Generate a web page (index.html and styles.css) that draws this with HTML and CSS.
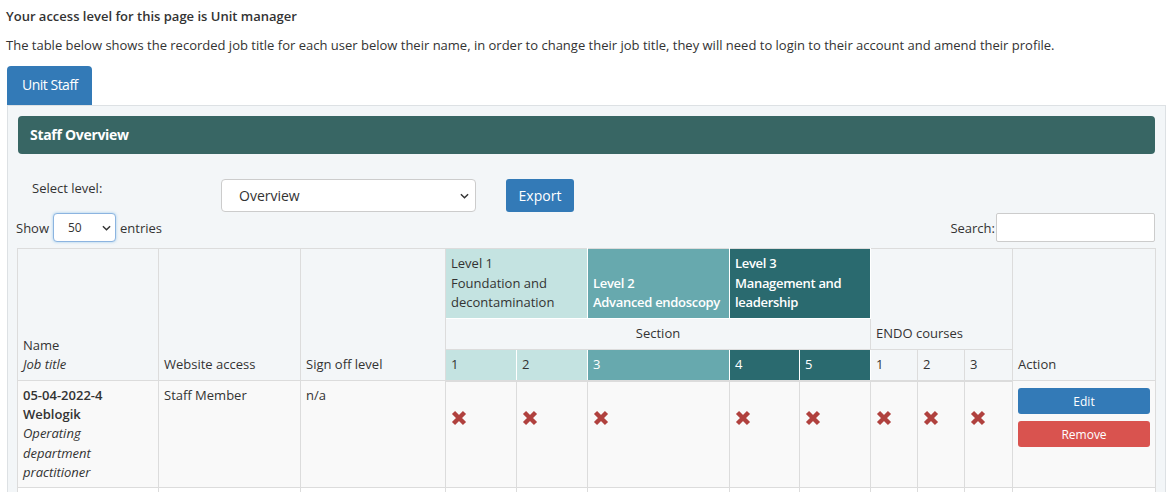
FILE: index.html
```html
<!DOCTYPE html>
<html>
<head>
<meta charset="utf-8">
<link rel="stylesheet" href="styles.css">
</head>
<body>
<div class="page">
  <p class="access">Your access level for this page is Unit manager</p>
  <p class="intro">The table below shows the recorded job title for each user below their name, in order to change their job title, they will need to login to their account and amend their profile.</p>
  <div class="tabs"><span class="tab">Unit Staff</span></div>
  <div class="panel">
    <div class="panel-head">Staff Overview</div>
    <div class="level-row">
      <label class="level-label">Select level:</label>
      <div class="select big"><span>Overview</span><svg class="chev" viewBox="0 0 10 6"><path d="M1 1l4 4 4-4" fill="none" stroke="#333" stroke-width="1.6"/></svg></div>
      <button class="btn btn-blue export">Export</button>
    </div>
    <div class="dt-row">
      <div class="show">Show <div class="select small"><span>50</span><svg class="chev" viewBox="0 0 10 6"><path d="M1 1l4 4 4-4" fill="none" stroke="#333" stroke-width="1.6"/></svg></div> entries</div>
      <div class="search">Search:<div class="search-input"></div></div>
    </div>
    <table class="grid">
      <colgroup>
        <col style="width:141px"><col style="width:142px"><col style="width:145px">
        <col style="width:71px"><col style="width:71px"><col style="width:142px">
        <col style="width:70px"><col style="width:71px">
        <col style="width:47px"><col style="width:47px"><col style="width:48px">
        <col style="width:143px">
      </colgroup>
      <thead>
        <tr class="r1">
          <th rowspan="3">Name<br><i>Job title</i></th>
          <th rowspan="3">Website access</th>
          <th rowspan="3">Sign off level</th>
          <th colspan="2" class="l1">Level 1<br>Foundation and decontamination</th>
          <th class="l2 strong">Level 2<br>Advanced endoscopy</th>
          <th colspan="2" class="l3 strong">Level 3<br>Management and leadership</th>
          <th colspan="3" rowspan="2">ENDO courses</th>
          <th rowspan="3">Action</th>
        </tr>
        <tr class="r2">
          <th colspan="5" class="center">Section</th>
        </tr>
        <tr class="r3">
          <th class="l1">1</th><th class="l1">2</th><th class="l2">3</th><th class="l3">4</th><th class="l3">5</th>
          <th>1</th><th>2</th><th>3</th>
        </tr>
      </thead>
      <tbody>
        <tr>
          <td class="name"><b>05-04-2022-4<br>Weblogik</b><br><i>Operating department practitioner</i></td>
          <td>Staff Member</td>
          <td>n/a</td>
          <td><svg class="x" viewBox="0 0 18 18"><path d="M3.5 3.5l11 11M14.5 3.5l-11 11"/></svg></td>
          <td><svg class="x" viewBox="0 0 18 18"><path d="M3.5 3.5l11 11M14.5 3.5l-11 11"/></svg></td>
          <td><svg class="x" viewBox="0 0 18 18"><path d="M3.5 3.5l11 11M14.5 3.5l-11 11"/></svg></td>
          <td><svg class="x" viewBox="0 0 18 18"><path d="M3.5 3.5l11 11M14.5 3.5l-11 11"/></svg></td>
          <td><svg class="x" viewBox="0 0 18 18"><path d="M3.5 3.5l11 11M14.5 3.5l-11 11"/></svg></td>
          <td><svg class="x" viewBox="0 0 18 18"><path d="M3.5 3.5l11 11M14.5 3.5l-11 11"/></svg></td>
          <td><svg class="x" viewBox="0 0 18 18"><path d="M3.5 3.5l11 11M14.5 3.5l-11 11"/></svg></td>
          <td><svg class="x" viewBox="0 0 18 18"><path d="M3.5 3.5l11 11M14.5 3.5l-11 11"/></svg></td>
          <td class="actions"><button class="btn btn-blue act">Edit</button><button class="btn btn-red act">Remove</button></td>
        </tr>
        <tr class="next"><td></td><td></td><td></td><td></td><td></td><td></td><td></td><td></td><td></td><td></td><td></td><td></td></tr>
      </tbody>
    </table>
  </div>
</div>
</body>
</html>
```
FILE: styles.css
```css
html, body {
  margin: 0;
  padding: 0;
  background: #fff;
  overflow: hidden;
}
body {
  font-family: "Open Sans", "Noto Sans", sans-serif;
  font-size: 13px;
  color: #333;
  line-height: 20px;
}
.page {
  padding: 6px 7px 0 6px;
}
.access {
  margin: 0;
  font-weight: 600;
}
.intro {
  margin: 9px 0 0 0;
}
.tabs {
  margin-top: 11px;
  padding-left: 1px;
  display: flex;
}
.tab {
  display: block;
  background: #337ab7;
  color: #fff;
  font-size: 14px;
  padding: 9px 14px 10px 15px;
  border-radius: 4px 4px 0 0;
  white-space: nowrap;
  letter-spacing: -0.5px;
}
.panel {
  margin-left: 1px;
  background: #f3f6f8;
  border: 1px solid #dde1e4;
  border-bottom: none;
  padding: 10px 10px 0 10px;
  height: 400px;
}
.panel-head {
  background: #386664;
  color: #fff;
  font-weight: 700;
  font-size: 14px;
  height: 38px;
  line-height: 38px;
  padding-left: 12px;
  border-radius: 4px;
  letter-spacing: -0.3px;
}
.level-row {
  display: flex;
  align-items: flex-start;
  margin-top: 25px;
  height: 34px;
}
.level-label {
  width: 189px;
  padding-left: 14px;
  line-height: 16px;
  padding-top: 1px;
}
.select {
  background: #fff;
  border: 1px solid #ccc;
  border-radius: 4px;
  display: flex;
  align-items: center;
  justify-content: space-between;
  box-sizing: border-box;
}
.select.big {
  width: 255px;
  height: 33px;
  padding: 0 6px 0 17px;
  font-size: 14px;
}
.select.small {
  width: 63px;
  height: 29px;
  padding: 0 4px 0 14px;
  font-size: 12px;
  margin: 0 4px 0 4px;
  border-color: #8cb4e0;
  box-shadow: 0 0 3px rgba(102, 175, 233, 0.6);
}
.chev {
  width: 9px;
  height: 6px;
}
.btn {
  border: none;
  color: #fff;
  font-family: inherit;
  border-radius: 3px;
  display: block;
  cursor: pointer;
}
.btn-blue { background: #337ab7; }
.btn-red { background: #d9534f; }
.export {
  margin-left: 30px;
  width: 68px;
  height: 33px;
  font-size: 14px;
  padding: 0;
}
.dt-row {
  display: flex;
  justify-content: space-between;
  align-items: center;
  margin-left: -2px;
  height: 29px;
}
.show {
  display: flex;
  align-items: center;
}
.search {
  display: flex;
  align-items: center;
}
.search-input {
  width: 157px;
  height: 27px;
  background: #fff;
  border: 1px solid #ccc;
  border-radius: 2px;
  margin-left: 1px;
}
.grid {
  margin-top: 6px;
  margin-left: -1px;
  border-collapse: collapse;
  table-layout: fixed;
  width: 1138px;
}
.grid th, .grid td {
  border: 1px solid #dcdcdc;
  padding: 5px;
  text-align: left;
  vertical-align: bottom;
  font-weight: 400;
  line-height: 19.7px;
}
.grid thead th {
  background: #f3f6f8;
}
.grid thead tr.r3 th {
  border-bottom: 2px solid #dcdcdc;
}
.grid th.center { text-align: center; }
.grid th.l1 { background: #c4e3e1; border-color: #fff; border-top-color: #dcdcdc; }
.grid th.l2 { background: #67a9ae; color: #fff; border-color: #fff; border-top-color: #dcdcdc; }
.grid th.l3 { background: #2a6a6f; color: #fff; border-color: #fff; border-top-color: #dcdcdc; }
.grid th.strong { font-weight: 600; letter-spacing: -0.3px; }
.grid tbody td {
  background: #f9f9f9;
  vertical-align: top;
  padding-top: 5px;
  padding-bottom: 5px;
  line-height: 19.2px;
}
.grid tbody td.name { padding-right: 12px; }
.grid tbody td b { font-weight: 600; }
.grid tbody tr.next td { height: 20px; background: #fff; }
.x {
  display: block;
  width: 18px;
  height: 18px;
  margin-top: 22px;
  margin-left: -1px;
}
.x path {
  stroke: #b0413e;
  stroke-width: 4.4;
  fill: none;
}
.actions { padding-top: 7px !important; }
.act {
  width: 100%;
  height: 26px;
  font-size: 12px;
  padding: 0;
}
.act + .act { margin-top: 7px; }
```
